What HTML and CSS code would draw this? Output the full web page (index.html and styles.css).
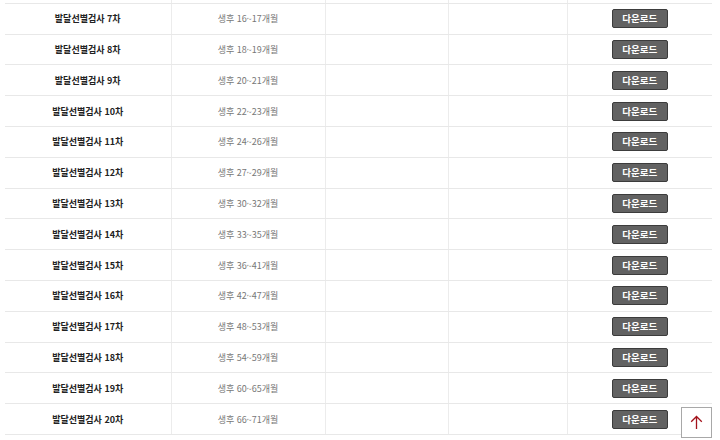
FILE: index.html
```html
<!DOCTYPE html>
<html lang="ko">
<head>
<meta charset="utf-8">
<link rel="stylesheet" href="styles.css">
</head>
<body>
<div class="wrap">
<table class="tbl">
<colgroup><col class="c1"><col class="c2"><col class="c3"><col class="c4"><col class="c5"></colgroup>
<tbody>
<tr class="prev"><td></td><td></td><td></td><td></td><td></td></tr>
<tr><td class="name">발달선별검사 7차</td><td class="age">생후 16~17개월</td><td></td><td></td><td class="act"><button class="dl">다운로드</button></td></tr>
<tr><td class="name">발달선별검사 8차</td><td class="age">생후 18~19개월</td><td></td><td></td><td class="act"><button class="dl">다운로드</button></td></tr>
<tr><td class="name">발달선별검사 9차</td><td class="age">생후 20~21개월</td><td></td><td></td><td class="act"><button class="dl">다운로드</button></td></tr>
<tr><td class="name">발달선별검사 10차</td><td class="age">생후 22~23개월</td><td></td><td></td><td class="act"><button class="dl">다운로드</button></td></tr>
<tr><td class="name">발달선별검사 11차</td><td class="age">생후 24~26개월</td><td></td><td></td><td class="act"><button class="dl">다운로드</button></td></tr>
<tr><td class="name">발달선별검사 12차</td><td class="age">생후 27~29개월</td><td></td><td></td><td class="act"><button class="dl">다운로드</button></td></tr>
<tr><td class="name">발달선별검사 13차</td><td class="age">생후 30~32개월</td><td></td><td></td><td class="act"><button class="dl">다운로드</button></td></tr>
<tr><td class="name">발달선별검사 14차</td><td class="age">생후 33~35개월</td><td></td><td></td><td class="act"><button class="dl">다운로드</button></td></tr>
<tr><td class="name">발달선별검사 15차</td><td class="age">생후 36~41개월</td><td></td><td></td><td class="act"><button class="dl">다운로드</button></td></tr>
<tr><td class="name">발달선별검사 16차</td><td class="age">생후 42~47개월</td><td></td><td></td><td class="act"><button class="dl">다운로드</button></td></tr>
<tr><td class="name">발달선별검사 17차</td><td class="age">생후 48~53개월</td><td></td><td></td><td class="act"><button class="dl">다운로드</button></td></tr>
<tr><td class="name">발달선별검사 18차</td><td class="age">생후 54~59개월</td><td></td><td></td><td class="act"><button class="dl">다운로드</button></td></tr>
<tr><td class="name">발달선별검사 19차</td><td class="age">생후 60~65개월</td><td></td><td></td><td class="act"><button class="dl">다운로드</button></td></tr>
<tr><td class="name">발달선별검사 20차</td><td class="age">생후 66~71개월</td><td></td><td></td><td class="act"><button class="dl">다운로드</button></td></tr>
</tbody>
</table>
</div>
<a class="top" href="#" aria-label="맨 위로">
<svg width="13" height="15" viewBox="0 0 13 15"><path d="M6.5 14V1.5M1.2 6.8L6.5 1.5L11.8 6.8" fill="none" stroke="#a3121b" stroke-width="1.3"/></svg>
</a>
</body>
</html>
```
FILE: styles.css
```css
html, body { margin: 0; padding: 0; background: #fff; }
body { font-family: "Noto Sans CJK KR", "Noto Sans", sans-serif; overflow: hidden; height: 440px; }
.wrap { padding: 0 8px 0 5px; }
.tbl { width: 707px; border-collapse: collapse; table-layout: fixed; margin-top: -28px; }
.c1 { width: 166px; } .c2 { width: 154px; } .c3 { width: 123px; } .c4 { width: 119px; } .c5 { width: 145px; }
.tbl td { height: 30.8px; padding: 0; box-sizing: border-box; border-top: 1px solid #e8e8e8; border-bottom: 1px solid #e8e8e8; border-left: 1px solid #ececec; text-align: center; vertical-align: middle; }
.tbl td:first-child { border-left: none; }
.name { font-size: 9px; font-weight: 700; color: #222; }
.age { font-size: 9px; color: #777; }
.act { line-height: 0; }
.dl { display: block; margin: 0 auto; width: 56px; height: 19px; padding: 0; background: #626262; border: 1px solid #3c3c3c; border-radius: 2px; color: #fff; font-family: inherit; font-size: 9.5px; font-weight: 700; line-height: 17px; }
.top { position: fixed; left: 681px; top: 407px; width: 31px; height: 31px; box-sizing: border-box; border: 1px solid #a8a8a8; background: #fff; display: flex; align-items: center; justify-content: center; }
```
